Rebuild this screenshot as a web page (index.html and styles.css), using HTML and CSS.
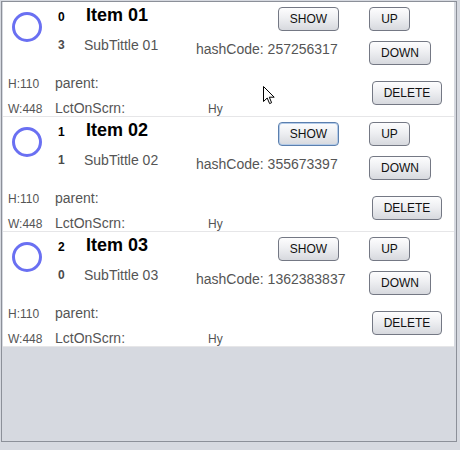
FILE: index.html
```html
<!DOCTYPE html>
<html>
<head>
<meta charset="utf-8">
<link rel="stylesheet" href="styles.css">
</head>
<body>
<div class="frame">
  <div class="list">
    <div class="item">
      <svg class="ring" viewBox="0 0 32 32" width="32" height="32"><circle cx="16" cy="16" r="13.5" fill="none" stroke="#6a70f2" stroke-width="3"/></svg>
      <div class="num num-top">0</div>
      <div class="title">Item 01</div>
      <button class="btn btn-show">SHOW</button>
      <button class="btn btn-up">UP</button>
      <div class="num num-sub">3</div>
      <div class="sub">SubTittle 01</div>
      <div class="hash">hashCode: 257256317</div>
      <button class="btn btn-down">DOWN</button>
      <div class="dim dim-h">H:110</div>
      <div class="lbl lbl-parent">parent:</div>
      <button class="btn btn-delete">DELETE</button>
      <div class="dim dim-w">W:448</div>
      <div class="lbl lbl-loc">LctOnScrn:</div>
      <div class="hy">Hy</div>
    </div>
    <div class="item">
      <svg class="ring" viewBox="0 0 32 32" width="32" height="32"><circle cx="16" cy="16" r="13.5" fill="none" stroke="#6a70f2" stroke-width="3"/></svg>
      <div class="num num-top">1</div>
      <div class="title">Item 02</div>
      <button class="btn btn-show focused">SHOW</button>
      <button class="btn btn-up">UP</button>
      <div class="num num-sub">1</div>
      <div class="sub">SubTittle 02</div>
      <div class="hash">hashCode: 355673397</div>
      <button class="btn btn-down">DOWN</button>
      <div class="dim dim-h">H:110</div>
      <div class="lbl lbl-parent">parent:</div>
      <button class="btn btn-delete">DELETE</button>
      <div class="dim dim-w">W:448</div>
      <div class="lbl lbl-loc">LctOnScrn:</div>
      <div class="hy">Hy</div>
    </div>
    <div class="item">
      <svg class="ring" viewBox="0 0 32 32" width="32" height="32"><circle cx="16" cy="16" r="13.5" fill="none" stroke="#6a70f2" stroke-width="3"/></svg>
      <div class="num num-top">2</div>
      <div class="title">Item 03</div>
      <button class="btn btn-show">SHOW</button>
      <button class="btn btn-up">UP</button>
      <div class="num num-sub">0</div>
      <div class="sub">SubTittle 03</div>
      <div class="hash">hashCode: 1362383837</div>
      <button class="btn btn-down">DOWN</button>
      <div class="dim dim-h">H:110</div>
      <div class="lbl lbl-parent">parent:</div>
      <button class="btn btn-delete">DELETE</button>
      <div class="dim dim-w">W:448</div>
      <div class="lbl lbl-loc">LctOnScrn:</div>
      <div class="hy">Hy</div>
    </div>
  </div>
</div>
<svg class="cursor" viewBox="0 0 12 19" width="12" height="19"><path d="M0.5 0.5 L0.5 15.5 L4.2 12 L6.6 17.6 L8.6 16.7 L6.3 11.2 L11.2 11.2 Z" fill="#fff" stroke="#000" stroke-width="1" stroke-linejoin="miter"/></svg>
</body>
</html>
```
FILE: styles.css
```css
html, body {
  margin: 0;
  padding: 0;
}
body {
  background: #d6d9e0;
  font-family: "Liberation Sans", Arial, sans-serif;
  position: relative;
  width: 460px;
  height: 450px;
  overflow: hidden;
}
.frame {
  margin: 1px 0 0 1px;
  width: 456px;
  height: 441px;
  box-sizing: border-box;
  border: 1px solid #8c9099;
  padding: 0 2px 0 1px;
}
.list {
  display: flex;
  flex-direction: column;
}
.item {
  background: #fff;
  height: 114px;
  border-bottom: 1px solid #e6e6e8;
  display: grid;
  grid-template-columns: 51px 30px 112px 82px 91px 1fr;
  grid-template-rows: 34px 32px 30px 18px;
  align-items: start;
  justify-items: start;
}
.ring {
  grid-column: 1;
  grid-row: 1 / 3;
  margin: 9px 0 0 8px;
  display: block;
}
.num {
  font-size: 12px;
  font-weight: bold;
  line-height: 1;
  margin-left: 4px;
  grid-column: 2;
}
.num-top {
  grid-row: 1;
  margin-top: 9px;
  color: #000;
}
.num-sub {
  grid-row: 2;
  margin-top: 3px;
  color: #4a4a4a;
}
.title {
  grid-column: 3;
  grid-row: 1;
  font-size: 18px;
  font-weight: bold;
  line-height: 1;
  margin: 4px 0 0 2px;
  color: #000;
}
.sub {
  grid-column: 3;
  grid-row: 2;
  font-size: 14px;
  line-height: 1;
  margin-top: 2px;
  color: #555;
}
.hash {
  grid-column: 4 / 6;
  grid-row: 2;
  font-size: 14px;
  line-height: 1;
  margin-top: 6px;
  color: #555;
  white-space: nowrap;
}
.dim {
  grid-column: 1;
  font-size: 12px;
  line-height: 1;
  margin-left: 5px;
  color: #555;
}
.dim-h {
  grid-row: 3;
  margin-top: 10px;
}
.dim-w {
  grid-row: 4;
  margin-top: 5px;
}
.lbl {
  grid-column: 2 / 4;
  font-size: 14px;
  line-height: 1;
  margin-left: 1px;
  color: #555;
}
.lbl-parent {
  grid-row: 3;
  margin-top: 8px;
}
.lbl-loc {
  grid-row: 4;
  margin-top: 3px;
}
.hy {
  grid-column: 4;
  grid-row: 4;
  font-size: 12px;
  line-height: 1;
  margin: 5px 0 0 12px;
  color: #555;
}
.btn {
  font-family: "Liberation Sans", Arial, sans-serif;
  font-size: 12px;
  color: #111;
  height: 24px;
  padding: 0;
  box-sizing: border-box;
  border: 1px solid #747884;
  border-radius: 4px;
  background: linear-gradient(#fdfdfe 0%, #eeeff2 45%, #d7d9de 100%);
  line-height: 22px;
  text-align: center;
}
.btn-show {
  grid-column: 5;
  grid-row: 1;
  width: 61px;
  margin-top: 5px;
}
.btn-show.focused {
  border-color: #5b7fae;
  box-shadow: inset 0 0 0 1px #b4cbe8;
}
.btn-up {
  grid-column: 6;
  grid-row: 1;
  width: 41px;
  margin-top: 5px;
}
.btn-down {
  grid-column: 6;
  grid-row: 2;
  width: 62px;
  margin-top: 5px;
}
.btn-delete {
  grid-column: 6;
  grid-row: 3 / 5;
  width: 70px;
  margin: 13px 0 0 3px;
}
.cursor {
  position: absolute;
  left: 263px;
  top: 86px;
}
```
